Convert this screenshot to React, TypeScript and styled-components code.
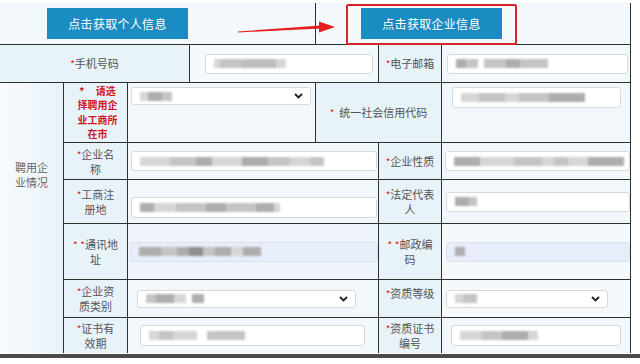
import React from "react";
import styled, { createGlobalStyle } from "styled-components";

const Global = createGlobalStyle`
  html, body { margin: 0; padding: 0; background: #fff; }
  body { font-family: "Noto Sans CJK SC", "Noto Sans", sans-serif; }
`;

const Page = styled.div`
  position: relative;
  width: 640px;
  height: 364px;
  overflow: hidden;
  background: #fff;
  padding-top: 3px;
  box-sizing: border-box;
`;

const Table = styled.div`
  display: grid;
  width: 630px;
  padding-right: 1px;
  grid-template-columns: 63px 63px 61px 125px 62px 62px 188px;
  grid-template-rows: 41px 37px 59px 36px 43px 55px 37px 35px;
  gap: 1px;
  background: #2f2f2f;
`;

const Cell = styled.div<{ $col: string; $row: string }>`
  grid-column: ${(p) => p.$col};
  grid-row: ${(p) => p.$row};
  background: #eef6fb;
  display: flex;
  min-width: 0;
`;

const TopCell = styled(Cell)<{ $pl: number }>`
  background: #f2f8fb;
  align-items: flex-start;
  padding: 5px 0 0 ${(p) => p.$pl}px;
`;

const ActionButton = styled.button`
  width: 141px;
  height: 31px;
  border: none;
  margin: 0;
  padding: 0;
  background: #1b8cc1;
  color: #fff;
  font-family: "Noto Sans CJK SC", "Noto Sans", sans-serif;
  font-size: 12px;
  letter-spacing: 0.3px;
`;

const Label = styled(Cell)<{ $top?: boolean }>`
  background: #e8f2f9;
  align-items: ${(p) => (p.$top ? "flex-start" : "center")};
  padding-top: ${(p) => (p.$top ? "6px" : "0")};
  justify-content: center;
  text-align: center;
  white-space: nowrap;
  font-size: 11px;
  line-height: 14px;
  color: #555;
`;

const SideLabel = styled(Cell)`
  background: linear-gradient(to right, #f8fbfd, #e8f2f9);
  align-items: flex-start;
  justify-content: center;
  text-align: center;
  padding-top: 77px;
  font-size: 11px;
  line-height: 15px;
  color: #666;
`;

const RedLabel = styled(Label)`
  color: #d3141c;
  font-weight: bold;
  font-size: 10px;
  line-height: 14.5px;
  padding-left: 4px;
`;

const Star = styled.span`
  color: #e0241b;
  font-size: 10px;
`;

const InputCell = styled(Cell)<{ $pad: string; $align?: string; $bg?: string }>`
  align-items: ${(p) => p.$align || "center"};
  padding: ${(p) => p.$pad};
  background: ${(p) => p.$bg || "#f1f7fb"};
`;

const Field = styled.div<{ $tint?: boolean; $h?: number }>`
  flex: 1;
  height: ${(p) => p.$h || 20}px;
  box-sizing: border-box;
  border: 1px solid ${(p) => (p.$tint ? "#dbe2ee" : "#d9d9d9")};
  border-radius: 3px;
  background: ${(p) => (p.$tint ? "#e7edf9" : "#fff")};
  display: flex;
  align-items: center;
  padding: 0 7px 0 8px;
  overflow: hidden;
`;

const Smudges = styled.div`
  display: flex;
  align-items: center;
  height: 100%;
  flex: 1;
  filter: blur(1.2px);
`;

const Smudge = styled.span<{ $w: number; $c: string }>`
  display: block;
  width: ${(p) => p.$w}px;
  height: 9px;
  background: ${(p) => p.$c};
  flex: none;
`;

const Chevron = styled.svg`
  flex: none;
  width: 9px;
  height: 6px;
`;

const Overlay = styled.svg`
  position: absolute;
  left: 0;
  top: 0;
  width: 640px;
  height: 60px;
  pointer-events: none;
`;

const Highlight = styled.div`
  position: absolute;
  left: 346px;
  top: 4px;
  width: 171px;
  height: 41px;
  box-sizing: border-box;
  border: 2px solid #d9232b;
  border-radius: 2px;
`;

const Band = styled.div`
  margin-top: 1px;
  height: 4px;
  width: 640px;
  background: #4b4b4b;
`;

type S = [number, string];

function Blur({ parts }: { parts: S[] }) {
  return (
    <Smudges>
      {parts.map(([w, c], i) => (
        <Smudge key={i} $w={w} $c={c} />
      ))}
    </Smudges>
  );
}

function Input({ parts, tint, h }: { parts: S[]; tint?: boolean; h?: number }) {
  return (
    <Field $tint={tint} $h={h}>
      <Blur parts={parts} />
    </Field>
  );
}

function Select({ parts }: { parts: S[] }) {
  return (
    <Field $h={18}>
      <Blur parts={parts} />
      <Chevron viewBox="0 0 9 6">
        <polyline points="1,1 4.5,4.5 8,1" fill="none" stroke="#222" strokeWidth="1.9" />
      </Chevron>
    </Field>
  );
}

const L = "#d6d6d6";
const M = "#c4c4c4";
const D = "#adadad";
const T = "transparent";

export default function App() {
  return (
    <>
      <Global />
      <Page>
        <Table>
          <TopCell $col="1 / 5" $row="1" $pl={47}>
            <ActionButton>点击获取个人信息</ActionButton>
          </TopCell>
          <TopCell $col="5 / 8" $row="1" $pl={45}>
            <ActionButton>点击获取企业信息</ActionButton>
          </TopCell>

          <Label $col="1 / 4" $row="2">
            <span>
              <Star>*</Star>手机号码
            </span>
          </Label>
          <InputCell $col="4 / 6" $row="2" $pad="0 5px 0 15px" $bg="#f4f9fc">
            <Input parts={[[6, L], [22, M], [34, "#bdbdbd"], [10, L]]} />
          </InputCell>
          <Label $col="6" $row="2">
            <span>
              <Star>*</Star>电子邮箱
            </span>
          </Label>
          <InputCell $col="7" $row="2" $pad="0 2px 0 5px">
            <Input parts={[[10, D], [12, M], [6, T], [22, M], [14, D], [28, M]]} />
          </InputCell>

          <SideLabel $col="1" $row="3 / 9">
            聘用企
            <br />
            业情况
          </SideLabel>

          <RedLabel $col="2" $row="3">
            <span>
              *&nbsp;&nbsp;&nbsp;&nbsp;&nbsp;请选
              <br />
              择聘用企
              <br />
              业工商所
              <br />
              在市
            </span>
          </RedLabel>
          <InputCell $col="3 / 5" $row="3" $pad="4px 4px 0 3px" $align="flex-start">
            <Select parts={[[8, L], [14, D], [10, M]]} />
          </InputCell>
          <Label $col="5 / 7" $row="3">
            <span>
              <Star>*</Star>&nbsp;&nbsp;统一社会信用代码
            </span>
          </Label>
          <InputCell $col="7" $row="3" $pad="4px 9px 0 10px" $align="flex-start">
            <Input h={21} parts={[[18, L], [26, M], [14, L], [30, M], [36, D]]} />
          </InputCell>

          <Label $col="2" $row="4">
            <span>
              <Star>*</Star>企业名
              <br />
              称
            </span>
          </Label>
          <InputCell $col="3 / 6" $row="4" $pad="0 1px 0 3px">
            <Input parts={[[30, L], [26, M], [16, D], [30, L], [26, D], [22, M], [20, L], [14, M]]} />
          </InputCell>
          <Label $col="6" $row="4">
            <span>
              <Star>*</Star>企业性质
            </span>
          </Label>
          <InputCell $col="7" $row="4" $pad="0 0 0 3px">
            <Input parts={[[26, D], [34, L], [28, M], [12, L], [14, M], [20, L], [36, D]]} />
          </InputCell>

          <Label $col="2" $row="5">
            <span>
              <Star>*</Star>工商注
              <br />
              册地
            </span>
          </Label>
          <InputCell $col="3 / 6" $row="5" $pad="0 1px 5px 3px" $align="flex-end">
            <Input h={21} parts={[[14, D], [22, L], [30, M], [20, D], [30, M], [18, D], [6, L]]} />
          </InputCell>
          <Label $col="6" $row="5">
            <span>
              <Star>*</Star>法定代表
              <br />
              人
            </span>
          </Label>
          <InputCell $col="7" $row="5" $pad="0 0 0 4px">
            <Input parts={[[14, D], [8, M]]} />
          </InputCell>

          <Label $col="2" $row="6">
            <span>
              <Star>*</Star> <Star>*</Star>通讯地
              <br />
              址
            </span>
          </Label>
          <InputCell $col="3 / 6" $row="6" $pad="0 0 0 2px" $bg="#eef4fa">
            <Input tint parts={[[22, D], [16, M], [12, D], [14, "#8f8f8f"], [12, M], [16, D], [12, L], [18, D]]} />
          </InputCell>
          <Label $col="6" $row="6">
            <span>
              <Star>*</Star> <Star>*</Star>邮政编
              <br />
              码
            </span>
          </Label>
          <InputCell $col="7" $row="6" $pad="0 0 0 4px" $bg="#f6f9fc">
            <Input tint parts={[[10, D]]} />
          </InputCell>

          <Label $col="2" $row="7">
            <span>
              <Star>*</Star>企业资
              <br />
              质类别
            </span>
          </Label>
          <InputCell $col="3 / 6" $row="7" $pad="0 22px 0 9px">
            <Select parts={[[10, M], [18, D], [12, L], [6, T], [12, D]]} />
          </InputCell>
          <Label $col="6" $row="7" $top>
            <span>
              <Star>*</Star>资质等级
            </span>
          </Label>
          <InputCell $col="7" $row="7" $pad="0 22px 0 4px" $bg="#f6f9fc">
            <Select parts={[[8, L], [14, M]]} />
          </InputCell>

          <Label $col="2" $row="8">
            <span>
              <Star>*</Star>证书有
              <br />
              效期
            </span>
          </Label>
          <InputCell $col="3 / 6" $row="8" $pad="0 13px 0 12px">
            <Input h={21} parts={[[10, L], [14, M], [24, L], [10, T], [38, M]]} />
          </InputCell>
          <Label $col="6" $row="8">
            <span>
              <Star>*</Star>资质证书
              <br />
              编号
            </span>
          </Label>
          <InputCell $col="7" $row="8" $pad="0 9px 0 9px">
            <Input h={21} parts={[[22, L], [20, M], [26, D], [10, L]]} />
          </InputCell>
        </Table>
        <Band />
        <Overlay viewBox="0 0 640 60">
          <polygon points="238,31.5 321,25.6 321,28.4 238,32.5" fill="#e41e1e" />
          <polygon points="319,21.5 335,27 319,32.5" fill="#e41e1e" />
        </Overlay>
        <Highlight />
      </Page>
    </>
  );
}
